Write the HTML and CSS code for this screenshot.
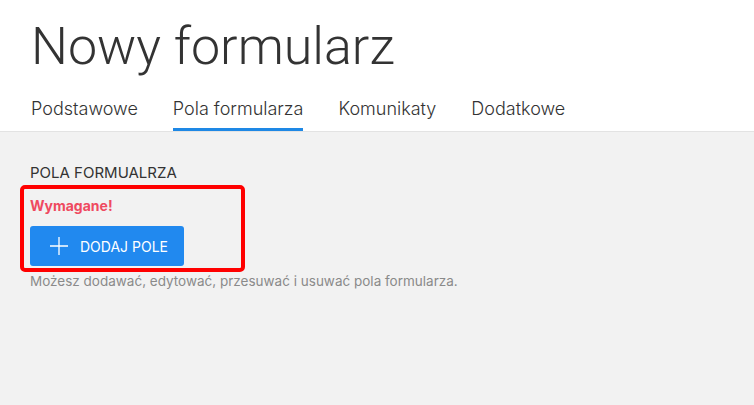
FILE: index.html
```html
<!DOCTYPE html>
<html lang="pl">
<head>
<meta charset="utf-8">
<title>Nowy formularz</title>
<link rel="stylesheet" href="styles.css">
</head>
<body>
<header class="header">
  <h1 class="title">Nowy formularz</h1>
  <nav class="tabs">
    <a class="tab">Podstawowe</a>
    <a class="tab active">Pola formularza</a>
    <a class="tab">Komunikaty</a>
    <a class="tab">Dodatkowe</a>
  </nav>
</header>
<main class="content">
  <h2 class="section-title">POLA FORMUALRZA</h2>
  <div class="error-box">
    <div class="error">Wymagane!</div>
    <button class="btn-add">
      <svg class="plus" width="18" height="18" viewBox="0 0 18 18"><path d="M9 0v18M0 9h18" stroke="#fff" stroke-width="1.3" fill="none"/></svg>
      <span>DODAJ POLE</span>
    </button>
  </div>
  <p class="help">Możesz dodawać, edytować, przesuwać i usuwać pola formularza.</p>
</main>
</body>
</html>
```
FILE: styles.css
```css
html, body {
  margin: 0;
  height: 100%;
}
body {
  font-family: Inter, "Noto Sans", sans-serif;
  background: #f2f2f2;
  display: flex;
  flex-direction: column;
}
.header {
  background: #fff;
  border-bottom: 1px solid #e3e3e3;
  padding: 0 31px;
}
.title {
  margin: 0;
  padding-top: 15px;
  font-family: Roboto, "Noto Sans", sans-serif;
  font-weight: 300;
  font-size: 52px;
  line-height: 64px;
  color: #333;
}
.tabs {
  display: flex;
  gap: 35px;
  margin-top: 19px;
}
.tab {
  font-size: 18px;
  font-weight: 300;
  color: #333;
  padding-bottom: 8px;
  border-bottom: 3px solid transparent;
  line-height: 22px;
}
.tab.active {
  border-bottom-color: #1e88e5;
}
.content {
  flex: 1;
  padding: 32px 30px 0;
}
.section-title {
  margin: 0;
  font-size: 15px;
  font-weight: 400;
  color: #333;
  line-height: 18px;
}
.error-box {
  margin: 3px 0 0 -10px;
  width: 225px;
  border: 4px solid #ff0000;
  border-radius: 5px;
  padding: 8px 6px 2px 6px;
  box-sizing: border-box;
}
.error {
  font-size: 14px;
  font-weight: 700;
  color: #ef4a60;
  line-height: 18px;
}
.btn-add {
  margin-top: 11px;
  display: flex;
  align-items: center;
  gap: 12px;
  height: 40px;
  width: 154px;
  padding: 0 0 0 20px;
  background: #2189ef;
  border: none;
  border-radius: 3px;
  color: #fff;
  font-family: Inter, "Noto Sans", sans-serif;
  font-size: 14px;
  white-space: nowrap;
  box-sizing: border-box;
}
.help {
  margin: 1px 0 0;
  font-size: 13.5px;
  color: #8a8a8a;
  line-height: 16px;
}
```
